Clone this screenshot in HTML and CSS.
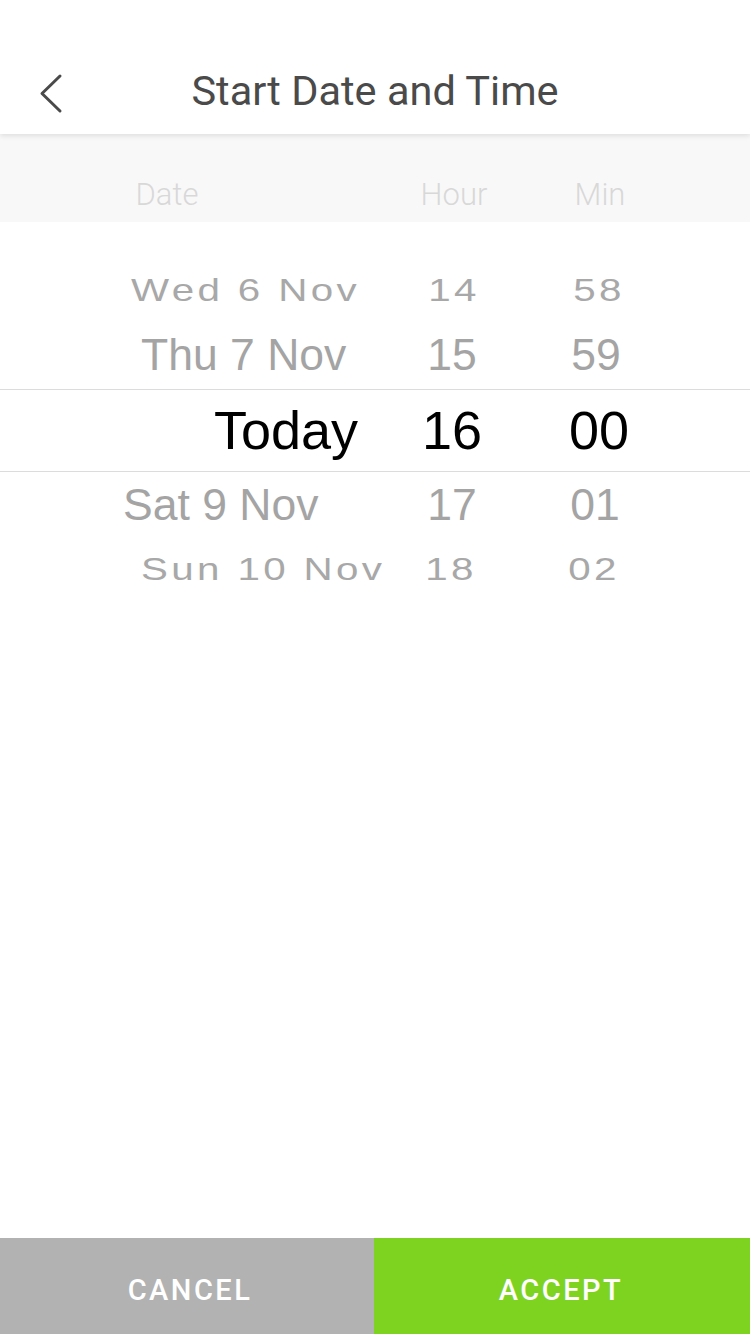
FILE: index.html
```html
<!DOCTYPE html>
<html lang="en">
<head>
<meta charset="utf-8">
<title>Start Date and Time</title>
<link rel="stylesheet" href="styles.css">
</head>
<body>
<div class="screen">
  <header class="header">
    <div class="back">
      <svg class="back-icon" width="30" height="46" viewBox="0 0 30 46"><polyline points="24,6 6,23.5 24,41" fill="none" stroke="#4a4a4a" stroke-width="3" stroke-linecap="round" stroke-linejoin="round"/></svg>
    </div>
    <h1 class="title">Start Date and Time</h1>
    <div class="spacer-cell"></div>
  </header>

  <div class="labels">
    <span class="label label-date">Date</span>
    <span class="label label-hour">Hour</span>
    <span class="label label-min">Min</span>
  </div>

  <div class="picker">
    <div class="row row-far row-wed">
      <span class="cell date"><span class="txt">Wed 6 Nov</span></span>
      <span class="cell hour"><span class="txt">14</span></span>
      <span class="cell min"><span class="txt">58</span></span>
    </div>
    <div class="row row-near row-thu">
      <span class="cell date"><span class="txt">Thu 7 Nov</span></span>
      <span class="cell hour"><span class="txt">15</span></span>
      <span class="cell min"><span class="txt">59</span></span>
    </div>
    <div class="row row-selected">
      <span class="cell date"><span class="txt">Today</span></span>
      <span class="cell hour"><span class="txt">16</span></span>
      <span class="cell min"><span class="txt">00</span></span>
    </div>
    <div class="row row-near row-sat">
      <span class="cell date"><span class="txt">Sat 9 Nov</span></span>
      <span class="cell hour"><span class="txt">17</span></span>
      <span class="cell min"><span class="txt">01</span></span>
    </div>
    <div class="row row-far row-sun">
      <span class="cell date"><span class="txt">Sun 10 Nov</span></span>
      <span class="cell hour"><span class="txt">18</span></span>
      <span class="cell min"><span class="txt">02</span></span>
    </div>
  </div>

  <div class="fill"></div>

  <footer class="actions">
    <button class="btn btn-cancel">CANCEL</button>
    <button class="btn btn-accept">ACCEPT</button>
  </footer>
</div>
</body>
</html>
```

FILE: styles.css
```css
* { box-sizing: border-box; }
html, body { margin: 0; padding: 0; background: #fff; }
body { font-family: "Liberation Sans", Arial, sans-serif; }

.screen {
  width: 750px;
  min-height: 1334px;
  display: flex;
  flex-direction: column;
}

.header {
  height: 134px;
  display: grid;
  grid-template-columns: 110px 1fr 110px;
  align-items: center;
  background: #fff;
  box-shadow: 0 2px 5px rgba(0, 0, 0, 0.10);
  position: relative;
  z-index: 1;
}
.back { padding-left: 36px; padding-top: 70px; height: 134px; }
.back-icon { display: block; }
.title {
  margin: 0;
  text-align: center;
  font-family: Roboto, "Liberation Sans", sans-serif;
  font-weight: 400;
  font-size: 41.5px;
  color: #4a4a4a;
  padding-top: 46px;
}

.labels {
  height: 88px;
  background: #f8f8f8;
  display: grid;
  grid-template-columns: 334px 240px 52px 1fr;
  align-items: center;
  font-family: Roboto, "Liberation Sans", sans-serif;
  font-weight: 300;
  font-size: 31px;
  color: #d8d8d8;
  padding-top: 32px;
}
.label { text-align: center; white-space: nowrap; }

.picker {
  padding-top: 43px;
  display: flex;
  flex-direction: column;
}
.row {
  display: grid;
  grid-template-columns: 390px 124px 170px 66px;
  align-items: center;
  color: #a4a4a4;
  white-space: nowrap;
}
.cell { display: block; }
.txt { display: inline-block; }
.date { text-align: left; }
.hour, .min { text-align: center; }

.row-far {
  height: 52px;
  line-height: 52px;
  font-size: 36px;
  letter-spacing: 3px;
  color: #a8a8a8;
}
.row-far .txt { transform: scale(1.12, 0.85); }
.row-far .date .txt { transform-origin: left center; }

.row-near {
  height: 52px;
  line-height: 52px;
  font-size: 44.5px;
}
.row-thu { margin-top: 12px; margin-bottom: 8px; }
.row-sat { height: 58px; line-height: 58px; margin-top: 4px; }
.row-sun { margin-top: 8px; height: 56px; line-height: 56px; }

.row-selected {
  height: 83px;
  line-height: 81px;
  border-top: 1px solid #dcdcdc;
  border-bottom: 1px solid #dcdcdc;
  font-size: 54px;
  color: #000;
}

.row-wed .date { padding-left: 131px; }
.row-thu .date { padding-left: 141px; }
.row-selected .date { padding-left: 214px; }
.row-sat .date { padding-left: 123px; }
.row-sun .date { padding-left: 141px; }

.row-wed .hour { padding-left: 4px; }
.row-thu .min { padding-right: 6px; }
.row-sat .min { padding-right: 8px; }
.row-sun .min { padding-right: 10px; }
.row-sun .hour { padding-right: 2px; }

.fill { flex: 1; }

.actions {
  height: 96px;
  display: grid;
  grid-template-columns: 374px 1fr;
}
.btn {
  border: 0;
  margin: 0;
  padding: 0;
  color: #fff;
  font-family: Roboto, "Liberation Sans", sans-serif;
  font-weight: 500;
  font-size: 29px;
  letter-spacing: 2.5px;
  padding-top: 8px;
}
.btn-cancel { background: #b2b2b2; padding-left: 6px; }
.btn-accept { background: #7ed321; padding-right: 2px; }
```
